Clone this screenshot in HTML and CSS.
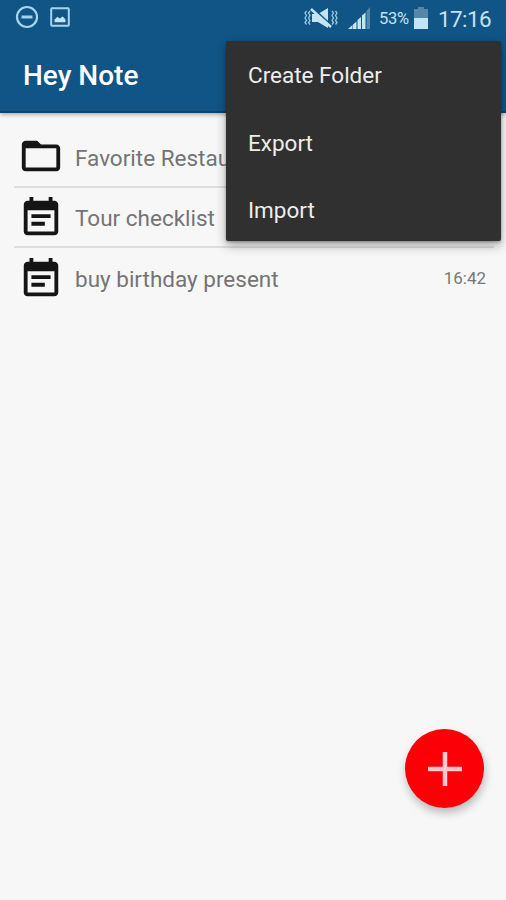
FILE: index.html
```html
<!DOCTYPE html>
<html lang="en">
<head>
<meta charset="utf-8">
<title>Hey Note</title>
<link rel="stylesheet" href="styles.css">
</head>
<body>
<div class="screen">
  <header class="top">
    <div class="status">
      <svg class="dnd" width="24" height="24" viewBox="0 0 24 24"><circle cx="12" cy="12" r="10" /><path d="M6.5 12h11"/></svg>
      <svg class="photo" width="20" height="20" viewBox="0 0 20 20"><rect x="1.2" y="1.2" width="17.6" height="17.6" rx=".8"/><path d="M4.5 15.2v-2.8l3-2.6 2.2 1.7 3-2 2.8 3v2.7z"/></svg>
      <span class="grow"></span>
      <svg class="mute" width="34" height="22" viewBox="0 0 34 22">
        <path class="fill" d="M8 7h6l10-6v20l-10-6H8z"/>
        <path class="cut" d="M8.500 1l18 16.500"/>
        <path class="slash" d="M7 2l20 18"/>
        <path class="line" d="M2.500 4l-1.500 2 1.500 2.500L1 11l1.500 2.500L1 15.500l1.500 2M6 4L4.500 6 6 8.500 4.500 11 6 13.500l-1.500 2 1.500 2M28 4l1.500 2-1.500 2.500 1.500 2.500-1.500 2.500 1.500 2-1.500 2M31.500 4l1.500 2-1.500 2.500 1.500 2.500-1.500 2.500 1.500 2-1.500 2"/>
      </svg>
      <svg class="signal" width="24" height="22" viewBox="0 0 24 22"><path d="M0 22l4.500-4v4zM5 17.500l3.500-3V22H5zM9.500 13l3.500-3v12H9.500zM14 8.500l3.500-3V22H14z"/><path class="dim" d="M18.500 4l3.500-4v22h-3.500z"/></svg>
      <span class="percent">53%</span>
      <svg class="battery" width="14" height="22" viewBox="0 0 14 22"><path class="dim" d="M4 0h6v2h4v9H0V2h4z"/><path d="M0 11h14v11H0z"/></svg>
      <span class="clock">17:16</span>
    </div>
    <h1>Hey Note</h1>
  </header>
  <ul class="notes">
    <li>
      <svg class="icon" viewBox="0 0 24 24"><path d="M20 6h-8l-2-2H4c-1.100 0-1.990.9-1.990 2L2 18c0 1.100.9 2 2 2h16c1.100 0 2-.9 2-2V8c0-1.100-.9-2-2-2zm0 12H4V8h16v10z"/></svg>
      <span class="name">Favorite Restau</span>
    </li>
    <li>
      <svg class="icon event" viewBox="0 0 24 24"><path d="M17 10H7v2h10v-2zm2-7h-1V1h-2v2H8V1H6v2H5c-1.110 0-1.990.9-1.990 2L3 19c0 1.100.89 2 2 2h14c1.100 0 2-.9 2-2V5c0-1.100-.9-2-2-2zm0 16H5V8h14v11zm-5-5H7v2h7v-2z"/></svg>
      <span class="name">Tour checklist</span>
    </li>
    <li>
      <svg class="icon event" viewBox="0 0 24 24"><path d="M17 10H7v2h10v-2zm2-7h-1V1h-2v2H8V1H6v2H5c-1.110 0-1.990.9-1.990 2L3 19c0 1.100.89 2 2 2h14c1.100 0 2-.9 2-2V5c0-1.100-.9-2-2-2zm0 16H5V8h14v11zm-5-5H7v2h7v-2z"/></svg>
      <span class="name">buy birthday present</span>
      <time>16:42</time>
    </li>
  </ul>
  <nav class="menu">
    <a>Create Folder</a>
    <a>Export</a>
    <a>Import</a>
  </nav>
  <button class="fab" aria-label="Add note"><svg width="36" height="36" viewBox="0 0 36 36"><path d="M18 1v34M1 18h34"/></svg></button>
</div>
</body>
</html>
```
FILE: styles.css
```css
* { box-sizing: border-box; }
body { margin: 0; font-family: Roboto, "Liberation Sans", sans-serif; }
.screen { position: relative; width: 506px; height: 900px; background: #f7f7f7; overflow: hidden; }
.top {
  height: 113px;
  background: #105586;
  border-bottom: 2px solid #0b436c;
  box-shadow: 0 1px 5px rgba(0, 0, 0, .4);
}
.status { display: flex; align-items: center; height: 36px; padding: 0 14px 0 15px; color: #c4e3f3; }
.status svg { flex: none; fill: #c4e3f3; }
.status .dnd { fill: none; stroke: #a5d5ee; stroke-width: 2.2; margin-top: -2px; }
.dnd path { stroke-width: 3; }
.status .photo { margin: -2px 0 0 11px; }
.photo rect { fill: none; stroke: #a5d5ee; stroke-width: 2; }
.grow { flex: 1; }
.mute { margin-right: 10px; }
.mute .cut { fill: none; stroke: #105586; stroke-width: 2; }
.mute .slash { fill: none; stroke: #c4e3f3; stroke-width: 2.4; }
.mute .line { fill: none; stroke: #9dc6dd; stroke-width: 1.3; }
.signal { margin-right: 7px; }
.dim { fill: #5488a9; }
.percent { width: 31px; font-size: 16.5px; letter-spacing: -.3px; white-space: nowrap; }
.battery { margin: 0 10px 0 4px; }
.clock { width: 54px; padding-top: 1px; font-size: 22.5px; letter-spacing: -.6px; white-space: nowrap; }
h1 { margin: 24px 0 0 23px; color: #fff; font-size: 28px; line-height: 32px; font-weight: 500; }
.notes { list-style: none; margin: 14px 12px 0 14px; padding: 0; }
.notes li { display: flex; align-items: center; height: 60.5px; padding: 0 8px 0 4px; border-bottom: 2px solid #dedede; }
.notes li:last-child { border-bottom: 0; height: 59px; }
.icon { flex: none; width: 46px; height: 46px; fill: #151515; }
.event { margin-top: 3px; }
.name { flex: 1; margin-left: 11px; padding-top: 3px; color: #747474; font-size: 22.5px; line-height: 30px; white-space: nowrap; }
time { padding-top: 1px; color: #777; font-size: 17px; }
.menu {
  position: absolute; left: 226px; top: 41px; width: 275px; height: 200px;
  background: #303030; border-radius: 2px;
  box-shadow: 0 5px 11px rgba(0, 0, 0, .3), 0 1px 3px rgba(0, 0, 0, .3);
}
.menu a { display: block; height: 67.5px; padding-left: 22px; color: #ededed; font-size: 22.5px; line-height: 69px; }
.fab {
  position: absolute; left: 405px; top: 729px; width: 79px; height: 79px; padding: 0;
  display: flex; align-items: center; justify-content: center;
  border: 0; border-radius: 50%; background: #fb0006; box-shadow: 1px 5px 8px rgba(0, 0, 0, .25);
}
.fab path { stroke: #ffc8d0; stroke-width: 4.5; }
```
